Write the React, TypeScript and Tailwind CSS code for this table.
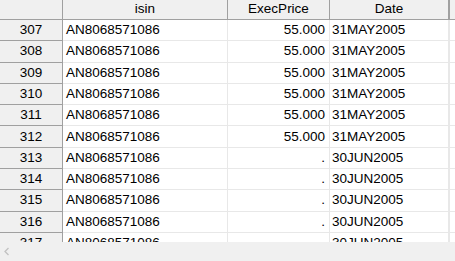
const ROWS = [
  { n: 307, isin: 'AN8068571086', price: '55.000', date: '31MAY2005' },
  { n: 308, isin: 'AN8068571086', price: '55.000', date: '31MAY2005' },
  { n: 309, isin: 'AN8068571086', price: '55.000', date: '31MAY2005' },
  { n: 310, isin: 'AN8068571086', price: '55.000', date: '31MAY2005' },
  { n: 311, isin: 'AN8068571086', price: '55.000', date: '31MAY2005' },
  { n: 312, isin: 'AN8068571086', price: '55.000', date: '31MAY2005' },
  { n: 313, isin: 'AN8068571086', price: '.', date: '30JUN2005' },
  { n: 314, isin: 'AN8068571086', price: '.', date: '30JUN2005' },
  { n: 315, isin: 'AN8068571086', price: '.', date: '30JUN2005' },
  { n: 316, isin: 'AN8068571086', price: '.', date: '30JUN2005' },
  { n: 317, isin: 'AN8068571086', price: '.', date: '30JUN2005' },
]

export default function App() {
  return (
    <div className="w-[455px] h-[261px] bg-white overflow-hidden flex flex-col font-['Liberation_Sans',Arial,sans-serif] text-[13.5px] text-black">
      <div className="h-[242px] overflow-hidden">
        {/* header */}
        <div className="flex h-[20px] bg-[#f0f0f0] border-b border-[#a0a0a0]">
          <div className="w-[63px] shrink-0 border-r border-[#a0a0a0]" />
          <div className="w-[165px] shrink-0 border-r border-[#a0a0a0] flex items-center justify-center">isin</div>
          <div className="w-[102px] shrink-0 border-r border-[#a0a0a0] flex items-center justify-center">ExecPrice</div>
          <div className="w-[120px] shrink-0 border-r-2 border-[#a0a0a0] flex items-center justify-center">Date</div>
          <div className="flex-1" />
        </div>

        {ROWS.map((row) => (
          <div key={row.n} className="flex h-[21.3px]">
            <div className="w-[63px] shrink-0 bg-[#f0f0f0] border-r border-b border-[#a0a0a0] flex items-center justify-center">
              {row.n}
            </div>
            <div className="w-[165px] shrink-0 border-r border-b border-[#e8e8e8] flex items-center pl-[3px]">
              {row.isin}
            </div>
            <div className="w-[102px] shrink-0 border-r border-b border-[#e8e8e8] flex items-center justify-end pr-[4px]">
              {row.price}
            </div>
            <div className="w-[120px] shrink-0 border-r-2 border-b border-[#e8e8e8] flex items-center pl-[2px]">
              {row.date}
            </div>
            <div className="flex-1 border-b border-[#e8e8e8]" />
          </div>
        ))}
      </div>

      {/* horizontal scrollbar */}
      <div className="flex-1 bg-[#f0f0f0] flex items-center pl-[4px]">
        <svg width="6" height="9" viewBox="0 0 6 9">
          <polyline points="4.5,1 1,4.5 4.5,8" fill="none" stroke="#c2c2c2" strokeWidth="1.3" />
        </svg>
      </div>
    </div>
  )
}
